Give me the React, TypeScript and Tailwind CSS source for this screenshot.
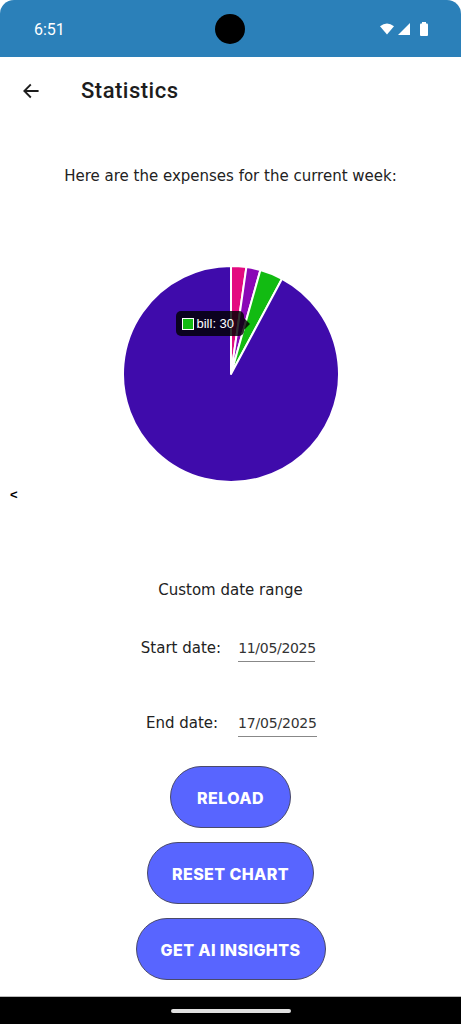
import React from "react";

const CX = 110;
const CY = 110;
const R = 108;

function pt(deg: number) {
  const a = (deg * Math.PI) / 180;
  return [CX + R * Math.sin(a), CY - R * Math.cos(a)];
}

function slice(a0: number, a1: number) {
  const [x0, y0] = pt(a0);
  const [x1, y1] = pt(a1);
  const large = a1 - a0 > 180 ? 1 : 0;
  return `M ${CX} ${CY} L ${x0} ${y0} A ${R} ${R} 0 ${large} 1 ${x1} ${y1} Z`;
}

const slices = [
  { a0: 0, a1: 8.2, color: "#e30b80" },
  { a0: 8.2, a1: 15.8, color: "#8a08b6" },
  { a0: 15.8, a1: 28.2, color: "#12bb12" },
  { a0: 28.2, a1: 360, color: "#3f0bab" },
];

export default function App() {
  const font = { fontFamily: '"DejaVu Sans", "Noto Sans", sans-serif' };
  return (
    <div className="w-[461px] h-[1024px] bg-white flex flex-col overflow-hidden" style={font}>
      {/* status bar */}
      <div className="h-[57px] bg-[#2b80b9] rounded-t-[14px] flex items-center relative shrink-0">
        <span className="ml-[34px] mt-[2px] text-white text-[16px]" style={{ fontFamily: "Roboto, sans-serif" }}>
          6:51
        </span>
        <div className="absolute left-[215px] top-[14px] w-[30px] h-[30px] rounded-full bg-black" />
        <div className="ml-auto mr-[32px] flex items-center gap-[4px]">
          <svg width="14" height="12" viewBox="0 0 14 12">
            <path d="M0 3.2 Q7 -2 14 3.2 L7 11.5 Z" fill="white" />
          </svg>
          <svg width="12" height="12" viewBox="0 0 12 12">
            <path d="M12 0 L12 12 L0 12 Z" fill="white" />
          </svg>
          <svg width="10" height="14" viewBox="0 0 10 14" className="ml-[5px]">
            <rect x="3" y="0" width="4" height="2" fill="white" />
            <rect x="1" y="1.5" width="8" height="12.5" rx="1" fill="white" />
          </svg>
        </div>
      </div>

      {/* header */}
      <div className="h-[64px] flex items-center shrink-0 pt-[3px]">
        <svg width="20" height="20" viewBox="0 0 24 24" className="ml-[21px]">
          <path d="M20 12H5M11 5l-7 7 7 7" fill="none" stroke="#1d1d1d" strokeWidth="2.2" strokeLinecap="square" />
        </svg>
        <span
          className="ml-[40px] text-[22px] tracking-[0.5px] font-medium text-[#1d1d1d]"
          style={{ fontFamily: "Roboto, sans-serif" }}
        >
          Statistics
        </span>
      </div>

      <p className="mt-[44px] text-center text-[15px] leading-[22px] text-[#222]">
        Here are the expenses for the current week:
      </p>

      {/* chart */}
      <div className="mt-[77px] self-center relative w-[220px] h-[220px]">
        <svg width="220" height="220" viewBox="0 0 220 220">
          {slices.map((s, i) => (
            <path key={i} d={slice(s.a0, s.a1)} fill={s.color} stroke="white" strokeWidth="2" strokeLinejoin="round" />
          ))}
        </svg>
        <div className="absolute left-[55px] top-[47px] h-[25px] w-[68px] rounded-[5px] bg-[rgba(0,0,0,0.82)] flex items-center">
          <div className="ml-[6px] w-[12px] h-[12px] bg-[#12bb12] border border-white" />
          <span
            className="ml-[3px] text-white text-[13px] leading-none"
            style={{ fontFamily: '"Liberation Sans", Arial, sans-serif' }}
          >
            bill: 30
          </span>
          <div className="absolute right-[-6px] top-[7px] w-0 h-0 border-y-[6px] border-y-transparent border-l-[6px] border-l-[rgba(0,0,0,0.82)]" />
        </div>
      </div>

      <div className="mt-[3px] pl-[10px] text-[13px] leading-[16px] text-black font-bold" style={{ fontFamily: '"Liberation Sans", sans-serif' }}>
        &lt;
      </div>

      <p className="mt-[76px] text-center text-[15px] leading-[22px] text-[#222]">Custom date range</p>

      <div className="mt-[31px] flex justify-center items-center gap-[17px] pr-[5px]">
        <span className="text-[15px] text-[#222] pt-[2px]">Start date:</span>
        <div className="w-[77px] h-[30px] pt-[3px] border-b border-[#888] flex items-center text-[14px] tracking-[-0.3px] text-[#333]">
          11/05/2025
        </div>
      </div>

      <div className="mt-[45px] flex justify-center items-center gap-[20px] pl-[2px]">
        <span className="text-[15px] text-[#222] pt-[2px]">End date:</span>
        <div className="w-[79px] h-[30px] pt-[3px] border-b border-[#888] flex items-center text-[14px] tracking-[-0.2px] text-[#333]">
          17/05/2025
        </div>
      </div>

      <div className="mt-[29px] flex flex-col items-center gap-[14px]" style={{ fontFamily: "Inter, sans-serif" }}>
        <button className="w-[121px] h-[62px] rounded-full bg-[#5865ff] border border-[#4a4a6a] text-white font-extrabold text-[16px] tracking-[0.4px] pt-[1px]">
          RELOAD
        </button>
        <button className="w-[167px] h-[62px] rounded-full bg-[#5865ff] border border-[#4a4a6a] text-white font-extrabold text-[16px] tracking-[0.4px] pt-[1px]">
          RESET CHART
        </button>
        <button className="w-[190px] h-[62px] rounded-full bg-[#5865ff] border border-[#4a4a6a] text-white font-extrabold text-[16px] tracking-[0.4px] pt-[1px]">
          GET AI INSIGHTS
        </button>
      </div>

      {/* nav bar */}
      <div className="mt-auto h-[28px] bg-black border-t border-[#bbb] flex items-center justify-center shrink-0">
        <div className="w-[120px] h-[4px] rounded-full bg-[#e0e0e0]" />
      </div>
    </div>
  );
}
